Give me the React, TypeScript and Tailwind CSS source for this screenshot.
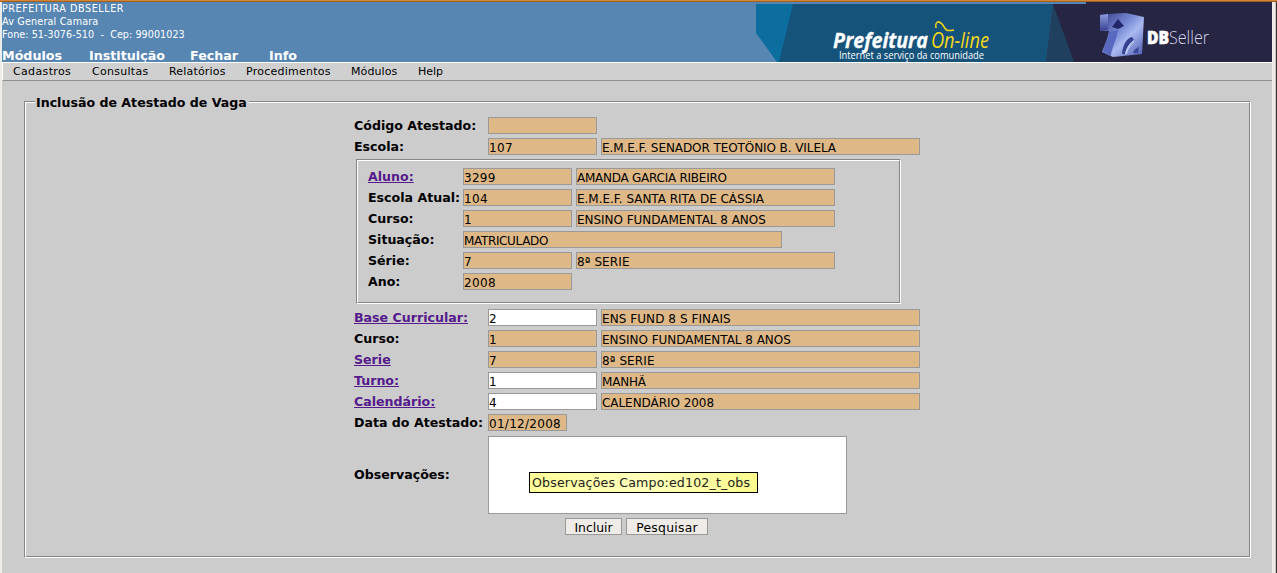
import React from "react";

const topMenu = [
  { label: "Módulos", cls: "w-[87px]" },
  { label: "Instituição", cls: "w-[101px]" },
  { label: "Fechar", cls: "w-[79px]" },
  { label: "Info", cls: "" },
];

const subMenu = [
  { label: "Cadastros", cls: "w-[79px] tracking-[0.35px]" },
  { label: "Consultas", cls: "w-[77px] tracking-[0.28px]" },
  { label: "Relatórios", cls: "w-[77px] tracking-[0.18px]" },
  { label: "Procedimentos", cls: "w-[105px] tracking-[0.25px]" },
  { label: "Módulos", cls: "w-[67px] tracking-[0.1px]" },
  { label: "Help", cls: "" },
];

function Field({
  value = "",
  cls = "w-[109px]",
  spacing = "tracking-normal",
  editable = false,
}: {
  value?: string;
  cls?: string;
  spacing?: string;
  editable?: boolean;
}) {
  return (
    <input
      className={`block h-[17px] shrink-0 border border-[#999] pt-[2px] pl-0 text-[12px] leading-[14px] text-black outline-none ${editable ? "bg-white" : "bg-[#deb887]"} ${cls} ${spacing}`}
      defaultValue={value}
      readOnly={!editable}
    />
  );
}

function Row({
  label,
  link = false,
  labelCls = "w-[134px]",
  children,
}: {
  label: string;
  link?: boolean;
  labelCls?: string;
  children: React.ReactNode;
}) {
  return (
    <div className="flex h-[21px] items-start gap-1">
      <div className={`-mr-1 shrink-0 text-[12.6px] leading-[18px] font-bold whitespace-nowrap ${labelCls}`}>
        {link ? (
          <a href="#" className="text-[#551a8b] underline">
            {label}
          </a>
        ) : (
          label
        )}
      </div>
      {children}
    </div>
  );
}

function Groove({ cls, children }: { cls: string; children: React.ReactNode }) {
  return (
    <div className={`flex border border-t-[#868682] border-r-white border-b-white border-l-[#868682] ${cls}`}>
      <div className="w-full border border-t-white border-r-[#868682] border-b-[#868682] border-l-white">{children}</div>
    </div>
  );
}

function Banner() {
  return (
    <svg width="516" height="60" viewBox="756 2 516 60" className="block shrink-0">
      <defs>
        <linearGradient id="cube" x1="0" y1="0" x2="1" y2="1">
          <stop offset="0" stopColor="#343b86" />
          <stop offset="0.4" stopColor="#7587d2" />
          <stop offset="0.6" stopColor="#a9b9f0" />
          <stop offset="1" stopColor="#4a55ac" />
        </linearGradient>
        <linearGradient id="side" x1="0" y1="0" x2="0" y2="1">
          <stop offset="0" stopColor="#8c9ce0" />
          <stop offset="1" stopColor="#38408f" />
        </linearGradient>
      </defs>
      <path d="M756 4H820V62H777L756 33Z" fill="#0b6e9f" />
      <path d="M793 4H1053L1046 62H779Z" fill="#15537b" />
      <path d="M1053 4L1086 4V2H1272V62H1046Z" fill="#262544" />
      <path d="M1053 4L1074 62H1046Z" fill="#1f415f" />
      <text x="833" y="47.5" fontFamily="Open Sans, sans-serif" fontSize="21" fontWeight="700" fontStyle="italic" fill="#fff" stroke="#fff" strokeWidth="0.3" textLength="95" lengthAdjust="spacingAndGlyphs">Prefeitura</text>
      <text x="931" y="47.5" fontFamily="Open Sans, sans-serif" fontSize="21" fontStyle="italic" fill="#f7d719" textLength="58" lengthAdjust="spacingAndGlyphs">On-line</text>
      <path d="M936 28C935 22 938 20 942 24C946 29 945 32 954 30" fill="none" stroke="#f7d719" strokeWidth="1.5" />
      <text x="839" y="58.5" fontFamily="Open Sans, sans-serif" fontSize="10" fill="#fff" textLength="145" lengthAdjust="spacingAndGlyphs">Internet a serviço da comunidade</text>
      <path d="M1100 15L1107 14L1126 13L1144 17L1142 54L1113 57L1102 52L1107 39L1109 31L1100 31Z" fill="url(#cube)" />
      <path d="M1100 15L1108 14L1108 30L1100 31Z" fill="url(#side)" />
      <path d="M1109 32C1109 40 1104 43 1103 52L1111 56C1111 49 1116 42 1118 30Z" fill="#5869bf" />
      <path d="M1118 19L1124 26L1118 29L1112 27Z" fill="#26276b" />
      <path d="M1122 54C1123 44 1127 38 1132 37L1134 40C1129 44 1127 48 1125 54Z" fill="#34418f" />
      <path d="M1125 54C1126 48 1129 44 1134 40L1134 42C1130 46 1128 49 1127 54Z" fill="#bdc9f5" />
      <path d="M1133 53C1134 50 1136 48 1139 47L1138 53Z" fill="#3c499b" />
      <text x="1147" y="43.5" fontFamily="Open Sans, sans-serif" fontSize="17" fontWeight="800" fill="#fff" stroke="#fff" strokeWidth="0.6" textLength="22" lengthAdjust="spacingAndGlyphs">DB</text>
      <text x="1169" y="43.5" fontFamily="Open Sans, sans-serif" fontSize="17.5" fontWeight="300" fill="#d4d4e4" textLength="40" lengthAdjust="spacingAndGlyphs">Seller</text>
    </svg>
  );
}

export default function App() {
  return (
    <div className="flex h-[573px] w-[1277px] flex-col overflow-hidden bg-[#ccc] font-['DejaVu_Sans',sans-serif] text-black">
      <div className="h-[2px] shrink-0 border-b border-[#9d5f25] bg-[#d38634]" />
      <div className="flex min-h-0 flex-1 border-r border-[#3b3634]">
        <div className="w-[2px] shrink-0 bg-[#efebe7]" />
        <div className="flex w-[1270px] shrink-0 flex-col">
          <header className="flex h-[60px] shrink-0 justify-between bg-[#5786b3] text-white">
            <div>
              <div className="h-[43px] text-[9.6px] leading-[13px] whitespace-pre">
                <div className="tracking-[0.58px]">PREFEITURA DBSELLER</div>
                <div className="tracking-[0.19px]">Av General Camara</div>
                <div className="tracking-[0.06px]">Fone: 51-3076-510  -  Cep: 99001023</div>
              </div>
              <nav className="flex text-[12.7px] leading-[21px] font-bold">
                {topMenu.map((m) => (
                  <div key={m.label} className={m.cls}>{m.label}</div>
                ))}
              </nav>
            </div>
            <Banner />
          </header>
          <nav className="flex h-[19px] shrink-0 border-t border-b border-l border-t-white border-b-[#909090] border-l-white bg-[#d0d0d0] pl-[10px] text-[11px] leading-[17px]">
            {subMenu.map((m) => (
              <div key={m.label} className={m.cls}>{m.label}</div>
            ))}
          </nav>
          <main className="flex-1 pt-5 pl-[22px]">
            <Groove cls="h-[457px] w-[1227px]">
              <div className="-mt-[9px] ml-[8px] h-[23px] w-fit pl-[1px]">
                <span className="block bg-[#ccc] pr-[2px] pl-[1px] text-[12.6px] leading-[18px] font-bold">Inclusão de Atestado de Vaga</span>
              </div>
              <form className="ml-[328px] w-[570px]">
                <Row label="Código Atestado:"><Field /></Row>
                <Row label="Escola:"><Field value="107" spacing="tracking-[0.4px]" /><Field value="E.M.E.F. SENADOR TEOTÔNIO B. VILELA" cls="w-[319px]" spacing="tracking-[-0.08px]" /></Row>
                <Groove cls="ml-[2px] h-[145px] w-[545px]">
                  <div className="pt-[7px] pl-[10px]">
                    <Row label="Aluno:" link labelCls="w-[95px]"><Field value="3299" spacing="tracking-[0.3px]" /><Field value="AMANDA GARCIA RIBEIRO" cls="w-[259px]" spacing="tracking-[-0.25px]" /></Row>
                    <Row label="Escola Atual:" labelCls="w-[95px]"><Field value="104" spacing="tracking-[0.4px]" /><Field value="E.M.E.F. SANTA RITA DE CÁSSIA" cls="w-[259px]" spacing="tracking-[-0.02px]" /></Row>
                    <Row label="Curso:" labelCls="w-[95px]"><Field value="1" /><Field value="ENSINO FUNDAMENTAL 8 ANOS" cls="w-[259px]" spacing="tracking-[-0.03px]" /></Row>
                    <Row label="Situação:" labelCls="w-[95px]"><Field value="MATRICULADO" cls="w-[319px]" spacing="tracking-[-0.35px]" /></Row>
                    <Row label="Série:" labelCls="w-[95px]"><Field value="7" /><Field value="8ª SERIE" cls="w-[259px]" spacing="tracking-[0.1px]" /></Row>
                    <Row label="Ano:" labelCls="w-[95px]"><Field value="2008" spacing="tracking-[0.4px]" /></Row>
                  </div>
                </Groove>
                <div className="pt-[5px]">
                  <Row label="Base Curricular:" link><Field value="2" editable /><Field value="ENS FUND 8 S FINAIS" cls="w-[319px]" spacing="tracking-[0.07px]" /></Row>
                  <Row label="Curso:"><Field value="1" /><Field value="ENSINO FUNDAMENTAL 8 ANOS" cls="w-[319px]" spacing="tracking-[-0.03px]" /></Row>
                  <Row label="Serie" link><Field value="7" /><Field value="8ª SERIE" cls="w-[319px]" spacing="tracking-[0.1px]" /></Row>
                  <Row label="Turno:" link><Field value="1" editable /><Field value="MANHÃ" cls="w-[319px]" spacing="tracking-[-0.2px]" /></Row>
                  <Row label="Calendário:" link><Field value="4" editable /><Field value="CALENDÁRIO 2008" cls="w-[319px]" spacing="tracking-[-0.05px]" /></Row>
                  <Row label="Data do Atestado:"><Field value="01/12/2008" cls="w-[79px]" spacing="tracking-[0.28px]" /></Row>
                </div>
                <div className="mt-[1px] flex h-[78px] items-center">
                  <div className="w-[134px] text-[12.6px] leading-[18px] font-bold">Observações:</div>
                  <div className="relative h-[78px] w-[359px]">
                    <textarea className="block h-full w-full resize-none border border-[#999] bg-white outline-none" />
                    <div className="absolute top-[36px] left-[41px] h-[21px] w-[229px] border border-black bg-linear-to-r from-[#ffff99] via-[#ffffbb] to-[#fafa8c] pl-[2px] text-[12.6px] leading-[19px] tracking-[0.15px] whitespace-nowrap text-[#222]">
                      Observações Campo:ed102_t_obs
                    </div>
                  </div>
                </div>
                <div className="mt-1 ml-[211px] flex gap-1 text-[12.4px] leading-[17px]">
                  <button type="button" className="h-[17px] w-[57px] border border-[#999] bg-[#efebe7]">Incluir</button>
                  <button type="button" className="h-[17px] w-[82px] border border-[#999] bg-[#efebe7] tracking-[0.25px]">Pesquisar</button>
                </div>
              </form>
            </Groove>
          </main>
        </div>
        <div className="w-[3px] shrink-0 bg-[#efebe7]" />
        <div className="flex-1 bg-[#c8c0b8]" />
      </div>
    </div>
  );
}
